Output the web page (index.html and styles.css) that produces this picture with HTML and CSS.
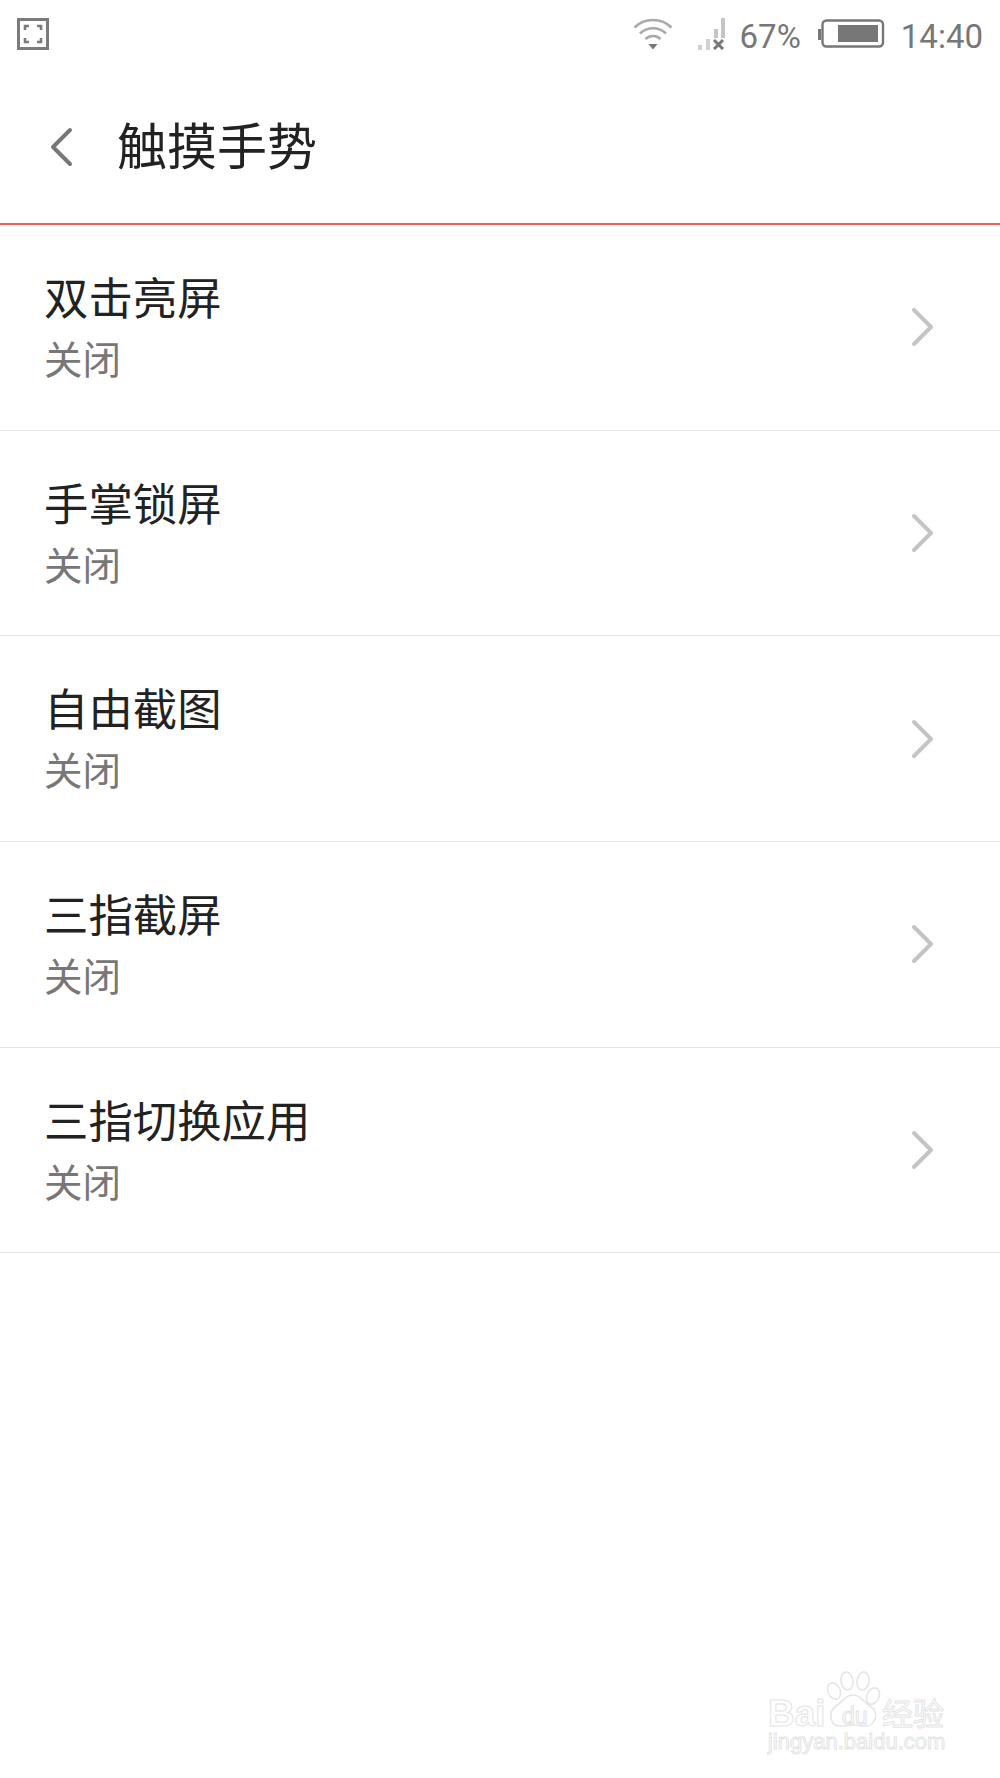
FILE: index.html
```html
<!DOCTYPE html>
<html lang="zh-CN">
<head>
  <meta charset="UTF-8" />
  <title>触摸手势</title>
  <link rel="stylesheet" href="styles.css">
</head>
<body>
  <div class="status-bar">
    <svg class="ic-shot" width="32" height="32" viewBox="0 0 32 32" fill="none" stroke="#7b7b7b">
      <rect x="1.5" y="1.5" width="29" height="29" stroke-width="3"/>
      <path d="M8 12V8h4M20 8h4v4M24 20v4h-4M12 24H8v-4" stroke-width="2.6"/>
    </svg>
    <div class="status-right">
      <svg class="ic-wifi" width="40" height="32" viewBox="0 0 40 32" fill="none" stroke="#a9a9a9" stroke-width="2.6">
        <path d="M1.5 9.5C11.5 -0.5 28.5 -0.5 38.5 9.5"/>
        <path d="M7 15.5C14 8.5 26 8.5 33 15.5"/>
        <path d="M12.5 21C16.5 17 23.5 17 27.5 21"/>
        <path d="M15.5 26h9L20 31.5z" fill="#777" stroke="none"/>
      </svg>
      <svg class="ic-signal" width="28" height="32" viewBox="0 0 28 32">
        <rect x="0" y="27" width="4" height="5" fill="#d0d0d0"/>
        <rect x="8" y="21" width="4" height="11" fill="#d0d0d0"/>
        <rect x="16" y="11" width="4" height="9" fill="#c4c4c4"/>
        <rect x="23" y="0" width="4" height="20" fill="#c4c4c4"/>
        <path d="M16 22l9 9M25 22l-9 9" stroke="#777" stroke-width="3" fill="none"/>
      </svg>
      <span class="status-text pct">67%</span>
      <svg class="ic-batt" width="67" height="30" viewBox="0 0 67 30">
        <rect x="0" y="10" width="3" height="11" fill="#777"/>
        <rect x="4.5" y="1.5" width="60.5" height="26" rx="4" fill="none" stroke="#777" stroke-width="2.4"/>
        <rect x="20" y="6" width="40" height="17" fill="#777"/>
      </svg>
      <span class="status-text time">14:40</span>
    </div>
  </div>

  <header class="title-bar">
    <svg class="back" width="24" height="40" viewBox="0 0 24 40" fill="none" stroke="#777" stroke-width="4" stroke-linecap="round" stroke-linejoin="round">
      <path d="M21 3L4 20l17 17"/>
    </svg>
    <h1>触摸手势</h1>
  </header>

  <ul class="list">
    <li class="row">
      <div class="row-text"><div class="row-name">双击亮屏</div><div class="row-state">关闭</div></div>
      <svg class="arrow" width="24" height="40" viewBox="0 0 24 40"><path d="M3 3l17 17L3 37"/></svg>
    </li>
    <li class="row">
      <div class="row-text"><div class="row-name">手掌锁屏</div><div class="row-state">关闭</div></div>
      <svg class="arrow" width="24" height="40" viewBox="0 0 24 40"><path d="M3 3l17 17L3 37"/></svg>
    </li>
    <li class="row">
      <div class="row-text"><div class="row-name">自由截图</div><div class="row-state">关闭</div></div>
      <svg class="arrow" width="24" height="40" viewBox="0 0 24 40"><path d="M3 3l17 17L3 37"/></svg>
    </li>
    <li class="row">
      <div class="row-text"><div class="row-name">三指截屏</div><div class="row-state">关闭</div></div>
      <svg class="arrow" width="24" height="40" viewBox="0 0 24 40"><path d="M3 3l17 17L3 37"/></svg>
    </li>
    <li class="row">
      <div class="row-text"><div class="row-name">三指切换应用</div><div class="row-state">关闭</div></div>
      <svg class="arrow" width="24" height="40" viewBox="0 0 24 40"><path d="M3 3l17 17L3 37"/></svg>
    </li>
  </ul>

  <!-- watermark sits over the page -->
  <div class="watermark">
    <svg class="paw" width="54" height="58" viewBox="0 0 54 58" fill="#fff" stroke="#e6e6e6" stroke-width="1.6">
      <ellipse cx="7" cy="20" rx="6" ry="8.5" transform="rotate(-25 7 20)"/>
      <ellipse cx="20" cy="10" rx="6" ry="9" transform="rotate(-8 20 10)"/>
      <ellipse cx="36" cy="10" rx="6" ry="9" transform="rotate(8 36 10)"/>
      <ellipse cx="46" cy="25" rx="6" ry="8.5" transform="rotate(25 46 25)"/>
      <path d="M26 24c8 0 10 7 17 11 10 6 6 21-6 20-4 0-7-1-11-1s-7 1-11 1C3 56 0 42 9 35c7-4 9-11 17-11z"/>
    </svg>
    <span class="wm-bai">Bai</span>
    <span class="wm-du">du</span>
    <span class="wm-jy">经验</span>
    <span class="wm-url">jingyan.baidu.com</span>
  </div>
</body>
</html>
```

FILE: styles.css
```css
:root {
  --cjk: "Noto Sans CJK SC", "Noto Sans", sans-serif;
  --grey: #777;
  --ink: #222;
}

* {
  box-sizing: border-box;
}

html, body {
  height: 100%;
}

body {
  margin: 0;
  background: #fff;
  font-family: var(--cjk);
  color: var(--ink);
  overflow: hidden;
  position: relative;
}

/* Status bar */
.status-bar {
  height: 70px;
  padding: 18px 17px 0 17px;
  display: flex;
  justify-content: space-between;
  align-items: flex-start;
}

.status-right {
  display: flex;
  align-items: center;
  height: 32px;
}

.status-text {
  font-family: Roboto, sans-serif;
  font-size: 33px;
  line-height: 32px;
  color: var(--grey);
  position: relative;
  top: 3px;
}

.ic-signal { margin-left: 25px; }
.pct { margin-left: 14px; }
.ic-batt { margin-left: 17px; }
.time { margin-left: 16px; }

/* Title bar */
.title-bar {
  height: 155px;
  display: flex;
  align-items: center;
  padding: 0 0 8px 49px;
  border-bottom: 2px solid #f35f5f;
}

.back {
  margin-top: 8px;
}

.title-bar h1 {
  margin: 0 0 0 44px;
  font-size: 50px;
  font-weight: 400;
  line-height: 60px;
}

/* Rows */
.list {
  margin: 0;
  padding: 0;
  list-style: none;
}

.row {
  height: 205.7px;
  display: flex;
  justify-content: space-between;
  align-items: center;
  padding: 0 65px 0 44px;
  border-bottom: 1px solid #e4e4e4;
}

.row-text {
  padding-bottom: 3px;
}

.row-name {
  font-size: 44.4px;
  line-height: 62px;
}

.row-state {
  font-size: 38.5px;
  line-height: 60px;
  color: var(--grey);
}

.arrow {
  fill: none;
  stroke: #c4c4c4;
  stroke-width: 4;
  stroke-linecap: round;
  stroke-linejoin: round;
}

/* Watermark */
.watermark {
  position: absolute;
  left: 765px;
  top: 1668px;
  width: 190px;
  height: 100px;
  color: #fff;
}

.watermark span {
  position: absolute;
  white-space: nowrap;
  -webkit-text-stroke: 1px #e4e4e4;
  font-family: "Liberation Sans", sans-serif;
}

.paw {
  position: absolute;
  left: 62px;
  top: 3px;
}

.wm-bai {
  left: 3px;
  top: 29px;
  font-size: 37px;
  font-weight: 700;
  line-height: 34px;
}

.wm-du {
  left: 77px;
  top: 34px;
  font-size: 23px;
  line-height: 28px;
  -webkit-text-stroke-color: #d8d8d8;
}

.watermark .wm-jy {
  left: 117px;
  top: 28px;
  font-size: 31px;
  line-height: 32px;
  font-family: var(--cjk);
}

.wm-url {
  left: 3px;
  top: 63px;
  font-size: 22px;
  line-height: 22px;
}
```
